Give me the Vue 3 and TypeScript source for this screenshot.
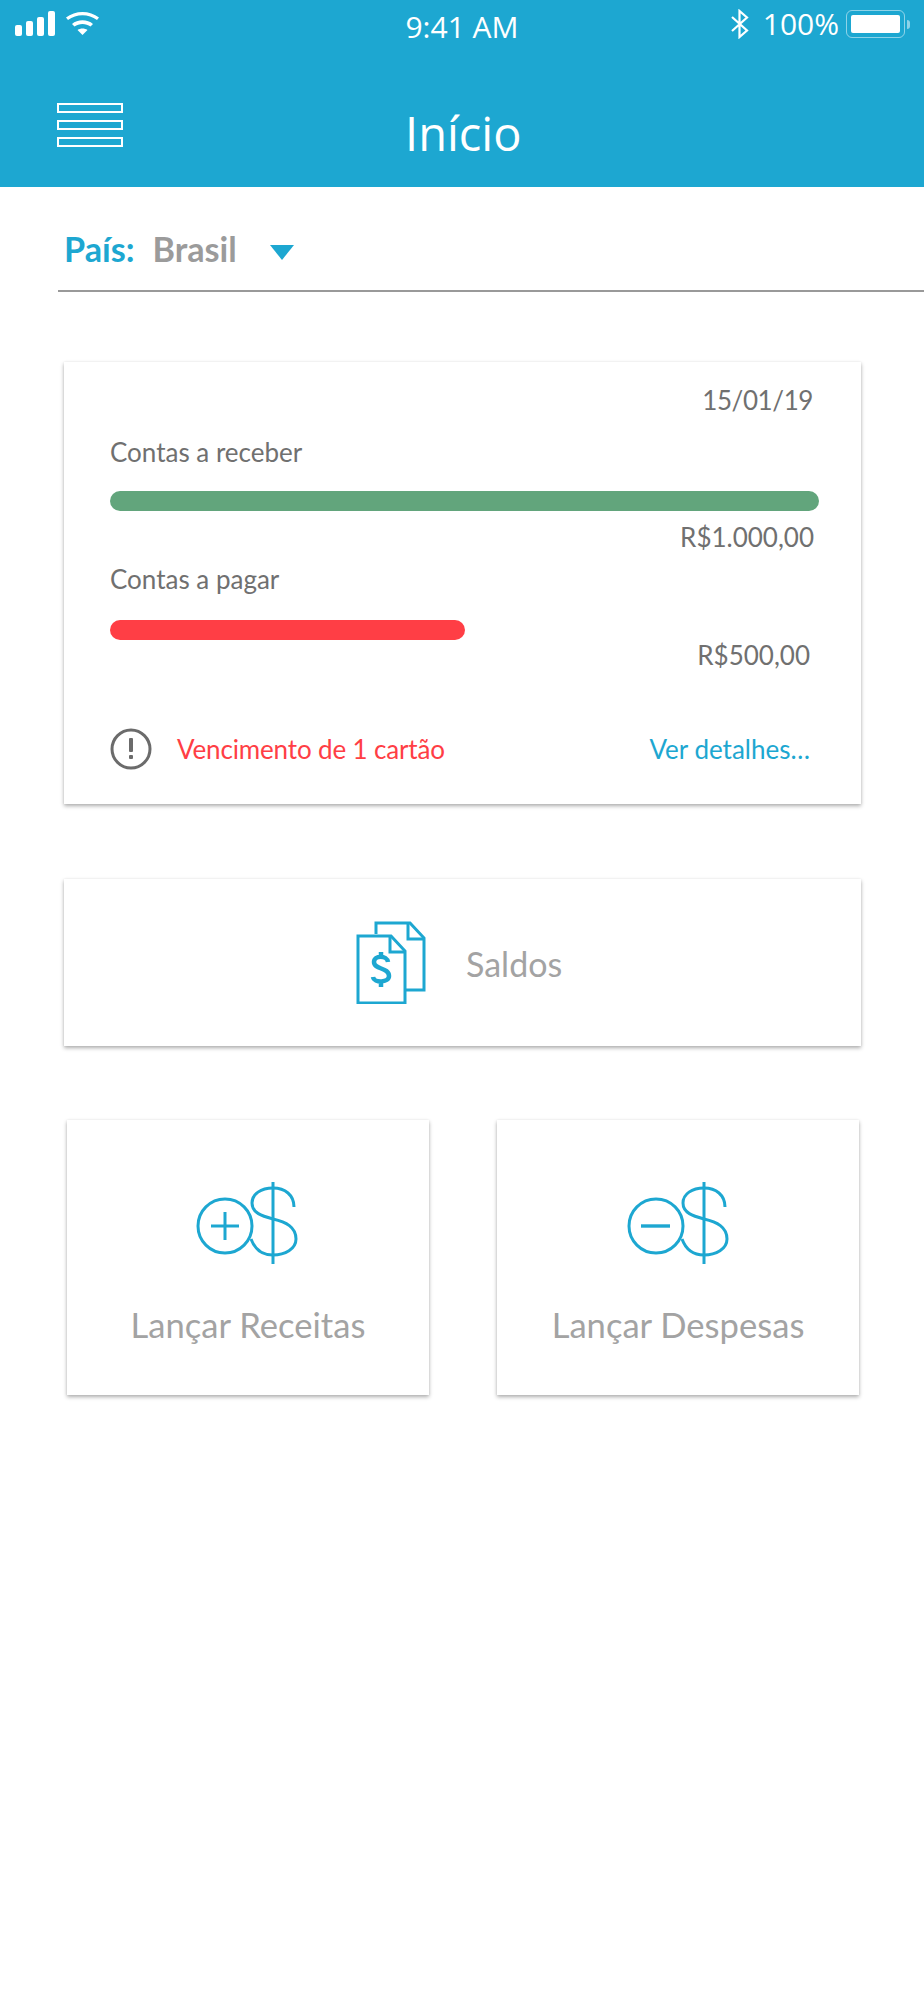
<template>
  <div class="page">
    <header class="top">
      <div class="status">
        <div class="status-left">
          <svg width="86" height="28" viewBox="0 0 86 28" fill="#fff">
            <rect x="0" y="14" width="7" height="11" rx="2" />
            <rect x="11" y="10" width="7" height="15" rx="2" />
            <rect x="22" y="6" width="7" height="19" rx="2" />
            <rect x="33" y="0" width="7" height="25" rx="2" />
            <path d="M51 6.500 C60 -1 75 -1 84 6.500 L82 9 C73.500 2.500 61.500 2.500 53 9 Z" />
            <path d="M57 13 C62.500 8 72.500 8 78 13 L75.500 15.500 C71 12 64 12 59.500 15.500 Z" />
            <path d="M62.500 19 C65.500 17 69.500 17 72.500 19 L67.500 24 Z" />
          </svg>
        </div>
        <div class="time">9:41 AM</div>
        <div class="status-right">
          <svg width="18" height="30" viewBox="0 0 18 30" fill="none" stroke="#fff" stroke-width="2.200">
            <path d="M1 8 L16 21.500 L8.500 28 L8.500 2 L16 8.500 L1 22" />
          </svg>
          <span class="battery-pct">100%</span>
          <div class="battery">
            <div class="battery-body"><div class="battery-fill"></div></div>
            <div class="battery-nub"></div>
          </div>
        </div>
      </div>
      <div class="nav">
        <div class="burger">
          <span v-for="n in 3" :key="n"></span>
        </div>
        <h1 class="title">Início</h1>
      </div>
    </header>

    <div class="country">
      <span class="country-label">País:</span>
      <span class="country-name">Brasil</span>
      <span class="caret"></span>
    </div>

    <section class="card summary">
      <div class="date">15/01/19</div>
      <div class="label first">Contas a receber</div>
      <div class="bar green" :style="{ width: '709px' }"></div>
      <div class="amount amount-a">R$1.000,00</div>
      <div class="label second">Contas a pagar</div>
      <div class="bar red" :style="{ width: '355px' }"></div>
      <div class="amount amount-b">R$500,00</div>
      <div class="alert">
        <svg class="alert-icon" width="42" height="42" viewBox="0 0 42 42">
          <circle cx="21" cy="21" r="19" fill="none" stroke="#6b6b6b" stroke-width="3" />
          <rect x="19" y="10" width="4" height="14" rx="1" fill="#6b6b6b" />
          <rect x="19" y="27" width="4" height="4" rx="1" fill="#6b6b6b" />
        </svg>
        <span class="alert-text">Vencimento de 1 cartão</span>
        <span class="details">Ver detalhes…</span>
      </div>
    </section>

    <section class="card balance">
      <svg width="70" height="83" viewBox="0 0 70 83" fill="none" stroke="#1da7d1" stroke-width="3">
        <path d="M20 13 L20 2 L54 2 L68 17 L68 69 L50 69" />
        <path d="M52 2 L52 18 L68 18" />
        <path d="M2 15 L35 15 L49 30 L49 82 L2 82 Z" />
        <path d="M34 15 L34 31 L49 31" />
        <path d="M32 41 C31 34 18 34 18 41 C18 49 33 46 33 55 C33 62 18 62 17 56 M25 31 V36 M25 61 V66" stroke-width="4.500" />
      </svg>
      <span class="balance-text">Saldos</span>
    </section>

    <div class="actions">
      <section class="card action">
        <svg width="160" height="110" viewBox="0 0 160 110" fill="none" stroke="#1da7d1" stroke-width="3">
          <circle cx="55" cy="67" r="27" />
          <path d="M41 67 H69 M55 53 V81" />
          <path d="M124 48 C124 36 115 29 103 29 C91 29 82 35 82 44 C82 54 92 57 103 60 C116 63 126 68 126 80 C126 90 115 96 103 96 C92 96 85 91 81 80" />
          <path d="M103 23 V105" />
        </svg>
        <span class="action-text">Lançar Receitas</span>
      </section>
      <section class="card action">
        <svg width="160" height="110" viewBox="0 0 160 110" fill="none" stroke="#1da7d1" stroke-width="3">
          <circle cx="56" cy="67" r="27" />
          <path d="M41 67 H70" stroke-width="3.400" />
          <path d="M125 48 C125 36 116 29 104 29 C92 29 83 35 83 44 C83 54 93 57 104 60 C117 63 127 68 127 80 C127 90 116 96 104 96 C93 96 86 91 82 80" />
          <path d="M104 23 V105" />
        </svg>
        <span class="action-text">Lançar Despesas</span>
      </section>
    </div>
  </div>
</template>

<script setup lang="ts">
</script>

<style>
html,
body {
  margin: 0;
  background: #fff;
}
</style>

<style scoped>
.page {
  width: 924px;
  height: 2000px;
  overflow: hidden;
  background: #fff;
  font-family: 'Lato', sans-serif;
}

.top {
  height: 187px;
  background: #1da7d1;
  color: #fff;
  font-family: 'Open Sans', sans-serif;
}

.status {
  display: grid;
  grid-template-columns: 1fr auto 1fr;
  align-items: flex-start;
  height: 56px;
}

.status-left {
  padding: 11px 0 0 15px;
}

.time {
  padding-top: 9px;
  font-size: 30px;
  line-height: 36px;
}

.status-right {
  display: flex;
  justify-content: flex-end;
  align-items: center;
  padding: 8px 14px 0 0;
}

.battery-pct {
  margin-left: 14px;
  font-size: 30px;
  line-height: 32px;
}

.battery {
  display: flex;
  align-items: center;
  margin-left: 7px;
}

.battery-body {
  width: 59px;
  height: 28px;
  box-sizing: border-box;
  padding: 4px;
  border: 1.500px solid rgba(255, 255, 255, 0.5);
  border-radius: 6px;
}

.battery-fill {
  height: 100%;
  background: #fff;
  border-radius: 2px;
}

.battery-nub {
  width: 3px;
  height: 9px;
  margin-left: 2px;
  background: rgba(255, 255, 255, 0.5);
  border-radius: 0 3px 3px 0;
}

.nav {
  display: flex;
  align-items: flex-start;
  padding: 47px 0 0 57px;
}

.burger {
  display: flex;
  flex-direction: column;
  gap: 7px;
  width: 66px;
}

.burger span {
  height: 10px;
  border: 2px solid #fff;
  box-sizing: border-box;
}

.title {
  margin: 0 0 0 282px;
  font-size: 47px;
  font-weight: 400;
  line-height: 60px;
}

.country {
  display: flex;
  align-items: center;
  height: 105px;
  margin-left: 58px;
  padding: 20px 0 0 6px;
  box-sizing: border-box;
  border-bottom: 2px solid #999;
  font-size: 34.200px;
  font-weight: 700;
}

.country-label {
  color: #1da7d1;
}

.country-name {
  margin-left: 18px;
  color: #9b9b9b;
}

.caret {
  margin: 8px 0 0 33px;
  border-left: 12.500px solid transparent;
  border-right: 12.500px solid transparent;
  border-top: 15px solid #1da7d1;
}

.card {
  background: #fff;
  box-shadow: 0 2px 4px rgba(0, 0, 0, 0.32), 0 0 2px rgba(0, 0, 0, 0.06);
}

.summary {
  width: 797px;
  height: 442px;
  box-sizing: border-box;
  margin: 70px 0 0 64px;
  padding: 22px 0 0 46px;
  color: #707070;
  font-size: 26px;
}

.date {
  padding-right: 48px;
  text-align: right;
  letter-spacing: -0.4px;
  line-height: 32px;
}

.label {
  line-height: 32px;
}

.label.first {
  margin-top: 20px;
}

.label.second {
  margin-top: 10px;
}

.bar {
  height: 20px;
  border-radius: 10px;
}

.bar.green {
  margin-top: 23px;
  background: #62a57c;
}

.bar.red {
  margin-top: 25px;
  background: #ff3e45;
}

.amount {
  text-align: right;
  line-height: 32px;
}

.amount-a {
  margin-top: 10px;
  padding-right: 47px;
}

.amount-b {
  margin-top: -1px;
  padding-right: 51px;
}

.alert {
  display: flex;
  align-items: center;
  margin-top: 57px;
  padding-right: 51px;
}

.alert-icon {
  flex: none;
}

.alert-text {
  margin-left: 25px;
  color: #ff3e45;
  letter-spacing: -0.15px;
}

.details {
  margin-left: auto;
  color: #1da7d1;
}

.balance {
  display: flex;
  align-items: center;
  width: 797px;
  height: 167px;
  box-sizing: border-box;
  margin: 75px 0 0 64px;
  padding-left: 292px;
}

.balance-text {
  margin: 2px 0 0 40px;
  color: #a3a3a3;
  font-size: 34px;
}

.actions {
  display: flex;
  gap: 68px;
  margin: 74px 0 0 67px;
}

.action {
  display: flex;
  flex-direction: column;
  align-items: center;
  width: 362px;
  height: 275px;
  box-sizing: border-box;
  padding-top: 39px;
}

.action svg {
  margin-left: 4px;
}

.action-text {
  margin-top: 36px;
  color: #a3a3a3;
  font-size: 34.600px;
  line-height: 40px;
}
</style>
